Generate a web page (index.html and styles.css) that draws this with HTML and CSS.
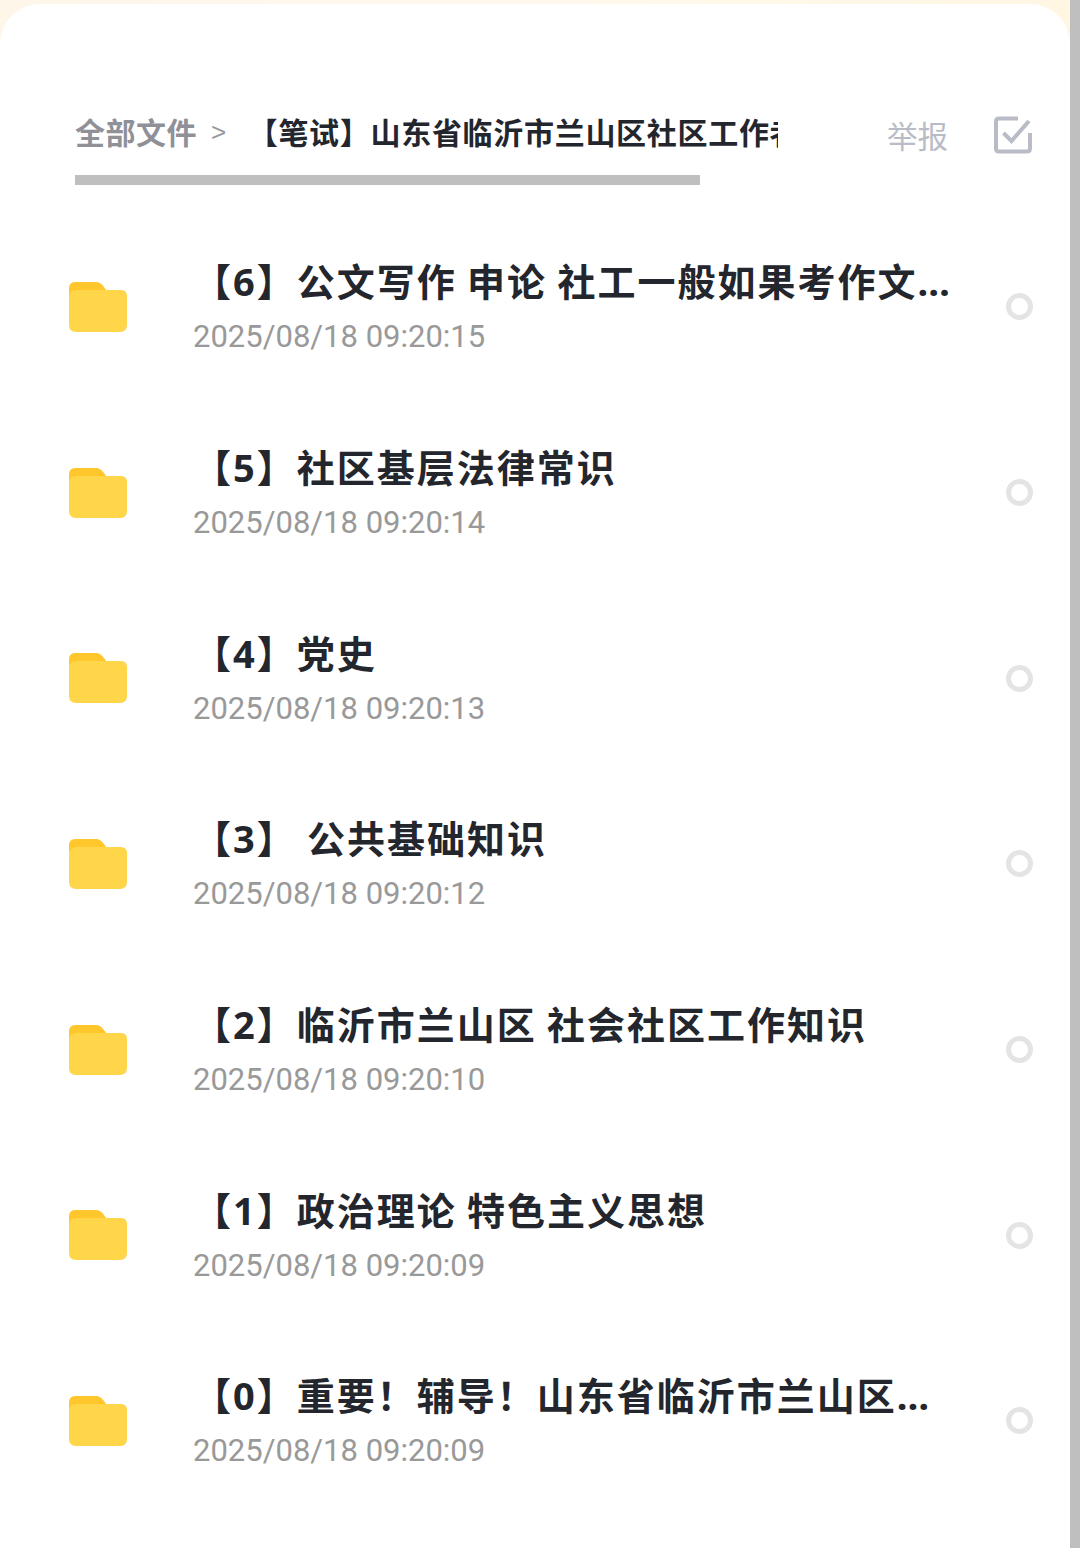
FILE: index.html
```html
<!DOCTYPE html>
<html lang="zh-CN">
<head>
    <meta charset="UTF-8">
    <meta name="viewport" content="width=device-width, initial-scale=1.0">
    <title>全部文件</title>
    <link rel="stylesheet" href="styles.css">
</head>
<body>
    <svg class="sprite" width="0" height="0">
        <symbol id="folder" viewBox="0 0 58 50">
            <path d="M0 32V7Q0 0 7 0H26Q31 0 34 4L37 8H52Q58 8 58 14V43Q58 50 51 50H7Q0 50 0 43Z" fill="#ffd549"/>
            <path d="M0 13V7Q0 0 7 0H26Q31 0 34 4L37 8H8Q2 8 0 13Z" fill="#ffc72c"/>
        </symbol>
    </svg>

    <div class="page">
        <main class="panel">
            <header class="top">
                <div class="crumb-box">
                    <div class="crumbs">
                        <span class="crumb-root">全部文件</span>
                        <span class="crumb-sep">&gt;</span>
                        <span class="crumb-name">【笔试】山东省临沂市兰山区社区工作者考试资料</span>
                    </div>
                    <div class="crumb-bar"></div>
                </div>
                <span class="report">举报</span>
                <svg class="check" width="38" height="38" viewBox="0 0 38 38" fill="none" stroke="#b9bcc6" stroke-width="4">
                    <path d="M24 2.500H5Q2 2.500 2 5.500V32.500Q2 35.500 5 35.500H33Q36 35.500 36 32.500V17"/>
                    <path d="M9.500 17L17.500 25L35 5"/>
                </svg>
            </header>

            <ul class="files">
                <li class="file">
                    <svg class="folder"><use href="#folder"/></svg>
                    <div class="file-info">
                        <div class="file-name">【6】公文写作 申论 社工一般如果考作文需要看看</div>
                        <div class="file-date">2025/08/18 09:20:15</div>
                    </div>
                    <span class="radio"></span>
                </li>
                <li class="file">
                    <svg class="folder"><use href="#folder"/></svg>
                    <div class="file-info">
                        <div class="file-name">【5】社区基层法律常识</div>
                        <div class="file-date">2025/08/18 09:20:14</div>
                    </div>
                    <span class="radio"></span>
                </li>
                <li class="file">
                    <svg class="folder"><use href="#folder"/></svg>
                    <div class="file-info">
                        <div class="file-name">【4】党史</div>
                        <div class="file-date">2025/08/18 09:20:13</div>
                    </div>
                    <span class="radio"></span>
                </li>
                <li class="file">
                    <svg class="folder"><use href="#folder"/></svg>
                    <div class="file-info">
                        <div class="file-name">【3】 公共基础知识</div>
                        <div class="file-date">2025/08/18 09:20:12</div>
                    </div>
                    <span class="radio"></span>
                </li>
                <li class="file">
                    <svg class="folder"><use href="#folder"/></svg>
                    <div class="file-info">
                        <div class="file-name">【2】临沂市兰山区 社会社区工作知识</div>
                        <div class="file-date">2025/08/18 09:20:10</div>
                    </div>
                    <span class="radio"></span>
                </li>
                <li class="file">
                    <svg class="folder"><use href="#folder"/></svg>
                    <div class="file-info">
                        <div class="file-name">【1】政治理论 特色主义思想</div>
                        <div class="file-date">2025/08/18 09:20:09</div>
                    </div>
                    <span class="radio"></span>
                </li>
                <li class="file">
                    <svg class="folder"><use href="#folder"/></svg>
                    <div class="file-info">
                        <div class="file-name">【0】重要！辅导！山东省临沂市兰山区社区工作者</div>
                        <div class="file-date">2025/08/18 09:20:09</div>
                    </div>
                    <span class="radio"></span>
                </li>
            </ul>
        </main>
        <div class="side-strip"></div>
    </div>
</body>
</html>
```

FILE: styles.css
```css
/* Basic reset */
html, body {
    margin: 0;
    padding: 0;
    height: 100%;
}

body {
    font-family: "Noto Sans CJK SC", "Noto Sans", sans-serif;
    background-color: #fff;
    overflow: hidden;
}

.sprite {
    display: block;
}

.page {
    display: flex;
    height: 1548px;
    background: linear-gradient(90deg, #fff6ea 0%, #fff8ec 50%, #fff7e2 100%);
}

.panel {
    width: 1070px;
    margin-top: 4px;
    background-color: #fff;
    border-radius: 40px 40px 0 0;
}

.side-strip {
    width: 10px;
    background-color: #bfbfbf;
}

/* Breadcrumb row */
.top {
    display: flex;
    align-items: flex-start;
    height: 210px;
    padding: 101px 30px 0 75px;
    box-sizing: border-box;
}

.crumb-box {
    width: 703px;
    flex-shrink: 0;
}

.crumbs {
    display: flex;
    align-items: center;
    height: 52px;
    white-space: nowrap;
    font-size: 30px;
    font-weight: 700;
    letter-spacing: 0.500px;
}

.crumb-root {
    flex-shrink: 0;
    color: #8f9098;
}

.crumb-sep {
    flex-shrink: 0;
    margin: 2px 21px 0 14px;
    color: #97989f;
    font-family: "Liberation Sans", sans-serif;
    font-size: 26px;
    font-weight: 400;
}

/* long name is cut by its own box, no ellipsis here */
.crumb-name {
    min-width: 0;
    overflow: hidden;
    color: #24262d;
    letter-spacing: 0.700px;
}

.crumb-bar {
    width: 625px;
    height: 10px;
    margin-top: 18px;
    background-color: #bfbfbf;
}

.report {
    flex-shrink: 0;
    margin: 8px 0 0 109px;
    font-size: 30.500px;
    line-height: 44px;
    white-space: nowrap;
    color: #b9bcc6;
}

.check {
    flex-shrink: 0;
    margin: 11px 0 0 46px;
}

/* File rows */
.files {
    list-style: none;
    margin: 0;
    padding: 0;
}

.file {
    display: flex;
    align-items: center;
    height: 185.700px;
    padding-left: 69px;
    box-sizing: border-box;
}

.folder {
    width: 58px;
    height: 50px;
    flex-shrink: 0;
    margin-right: 66px;
}

.file-info {
    width: 760px;
    flex-shrink: 0;
    padding-top: 5px;
}

/* Noto Sans first so the ellipsis sits on the baseline */
.file-name {
    font-family: "Noto Sans", "Noto Sans CJK SC", sans-serif;
    font-size: 38px;
    font-weight: 700;
    letter-spacing: 2px;
    word-spacing: -1.500px;
    line-height: 54px;
    color: #24262d;
    white-space: nowrap;
    overflow: hidden;
    text-overflow: ellipsis;
}

.file-date {
    margin-top: 2px;
    font-family: Roboto, sans-serif;
    font-size: 31px;
    line-height: 54px;
    color: #999;
}

.radio {
    width: 27px;
    height: 27px;
    margin-left: 53px;
    border: 5px solid #e4e4e4;
    border-radius: 50%;
    box-sizing: border-box;
}
```
